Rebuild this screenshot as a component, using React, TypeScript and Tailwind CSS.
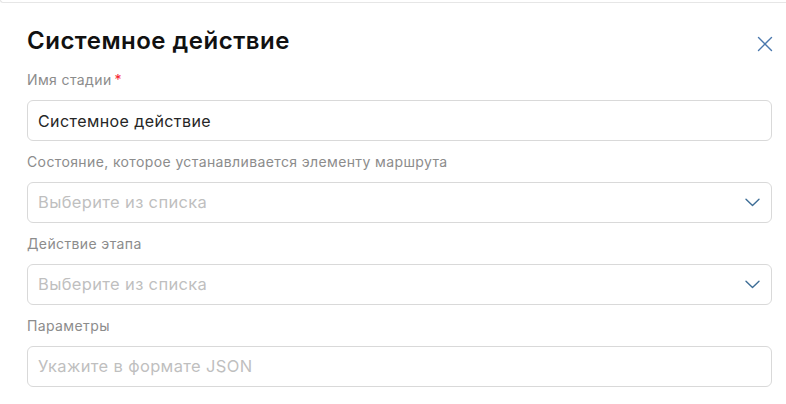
import React from "react";

function Chevron() {
  return (
    <svg width="15" height="9" viewBox="0 0 15 9" fill="none">
      <path d="M1 1.2 L7.5 7.5 L14 1.2" stroke="#3d6d96" strokeWidth="1.4" strokeLinecap="round" strokeLinejoin="round" />
    </svg>
  );
}

function Label({ children, required }: { children: React.ReactNode; required?: boolean }) {
  return (
    <div className="text-[14px] leading-[18px] text-[#8c8c8c] mb-[11px] tracking-[0.38px]">
      {children}
      {required && <span className="text-[#f5222d] ml-[3px]">*</span>}
    </div>
  );
}

function Field({ label, required, value, placeholder, select }: { label: string; required?: boolean; value?: string; placeholder?: string; select?: boolean }) {
  return (
    <div className="mb-[12px]">
      <Label required={required}>{label}</Label>
      <div className="h-[41px] border border-[#d9d9d9] rounded-[6px] flex items-center pl-[10px] pr-[11px] bg-white">
        {value ? (
          <span className="flex-1 text-[16px] tracking-[0.42px] text-[#262626]">{value}</span>
        ) : (
          <span className="flex-1 text-[16.5px] tracking-[0.35px] text-[#bfbfbf]">{placeholder}</span>
        )}
        {select && <Chevron />}
      </div>
    </div>
  );
}

export default function App() {
  return (
    <div className="w-[786px] h-[404px] bg-white overflow-hidden relative" style={{ fontFamily: "Inter, 'Noto Sans', sans-serif" }}>
      <div className="h-[3px] border-b border-l border-[#e6e6e6] rounded-bl-[4px]" />
      <div className="pl-[27px] pr-[14px]">
        <div className="flex items-center justify-between h-[40px] mt-[18px] mb-[10px]">
          <h1 className="text-[24px] font-semibold text-[#111111] tracking-[0.5px]">Системное действие</h1>
          <svg width="16" height="16" viewBox="0 0 16 16" className="mr-[-1px] mt-[6px]">
            <path d="M1.5 1.5 L14.5 14.5 M14.5 1.5 L1.5 14.5" stroke="#4a78ad" strokeWidth="1.4" strokeLinecap="round" />
          </svg>
        </div>
        <Field label="Имя стадии" required value="Системное действие" />
        <Field label="Состояние, которое устанавливается элементу маршрута" placeholder="Выберите из списка" select />
        <Field label="Действие этапа" placeholder="Выберите из списка" select />
        <Field label="Параметры" placeholder="Укажите в формате JSON" />
      </div>
    </div>
  );
}
